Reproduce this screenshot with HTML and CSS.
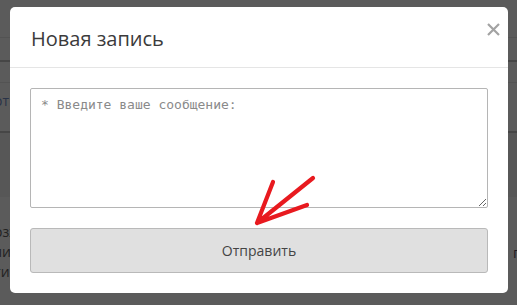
FILE: index.html
```html
<!DOCTYPE html>
<html lang="ru">
<head>
<meta charset="utf-8">
<title>Новая запись</title>
<link rel="stylesheet" href="styles.css">
</head>
<body>
<div class="page">
  <div class="row r1"></div>
  <div class="row r2"></div>
  <div class="row r3"></div>
  <div class="row r4"><span class="bgtext">Вот</span></div>
  <div class="row r5"></div>
  <div class="para">
    <p>Возж</p>
    <p>Вли</p>
    <p>Вти</p>
  </div>
  <div class="rightglyph">г</div>
</div>
<div class="modal">
  <div class="modal-header">
    <h4 class="modal-title">Новая запись</h4>
    <button class="close" type="button" aria-label="Закрыть">
      <svg width="13" height="13" viewBox="0 0 13 13"><path d="M1 1L12 12M12 1L1 12" stroke="#a3a3a3" stroke-width="2.2" fill="none"/></svg>
    </button>
  </div>
  <div class="modal-body">
    <textarea class="message" placeholder="* Введите ваше сообщение:"></textarea>
    <button class="send" type="button">Отправить</button>
  </div>
  <svg class="arrow" width="80" height="70" viewBox="0 0 80 70">
    <path d="M71 8L15 53M31 12L15 53L65 35" stroke="#e81a1f" stroke-width="4.2" stroke-linecap="round" stroke-linejoin="round" fill="none"/>
  </svg>
</div>
</body>
</html>
```
FILE: styles.css
```css
html, body {
  margin: 0;
  padding: 0;
}
body {
  width: 517px;
  height: 305px;
  overflow: hidden;
  background: #5b5b5b;
  font-family: "Open Sans", "Liberation Sans", sans-serif;
}
.page {
  display: flex;
  flex-direction: column;
}
.row {
  border-bottom: 1px solid #4e4e4e;
}
.r1 { height: 37px; border-bottom-color: #535353; }
.r2 { height: 22px; border-bottom-color: #464646; border-bottom-width: 2px; }
.r3 { height: 20px; border-bottom-color: #535353; }
.r4 { height: 48px; border-bottom-color: #464646; border-bottom-width: 2px; position: relative; }
.r5 { height: 64px; background: #575757; border-bottom: none; }
.bgtext {
  position: absolute;
  left: -15px;
  top: 8px;
  font-size: 14px;
  color: #2a3348;
}
.para {
  padding-top: 25px;
}
.para p {
  margin: 0 0 0 -15px;
  font-size: 14px;
  line-height: 20px;
  color: #222;
}
.rightglyph {
  position: absolute;
  left: 513px;
  top: 243px;
  font-size: 14px;
  color: #1e1a22;
}
.modal {
  position: fixed;
  left: 10px;
  top: 7px;
  width: 498px;
  height: 286px;
  background: #fff;
  border-radius: 5px;
  box-sizing: border-box;
  display: flex;
  flex-direction: column;
}
.modal-header {
  height: 60px;
  border-bottom: 1px solid #e5e5e5;
  display: flex;
  align-items: center;
  justify-content: space-between;
  padding: 0 8px 0 21px;
}
.modal-title {
  margin: 0;
  font-weight: 400;
  font-size: 20px;
  color: #3b3b3b;
  padding-top: 2px;
}
.close {
  border: 0;
  background: none;
  padding: 0;
  width: 13px;
  height: 13px;
  align-self: flex-start;
  margin-top: 16px;
  display: flex;
}
.modal-body {
  padding: 20px 20px 0 20px;
  display: flex;
  flex-direction: column;
}
.message {
  box-sizing: border-box;
  width: 458px;
  height: 120px;
  margin: 0;
  border: 1px solid #b5b5b5;
  border-radius: 2px;
  padding: 8px 10px;
  font-family: "DejaVu Sans Mono", monospace;
  font-size: 13px;
  line-height: 16px;
  resize: vertical;
}
.message::placeholder {
  color: #8a8a8a;
}
.send {
  margin-top: 20px;
  box-sizing: border-box;
  width: 458px;
  height: 45px;
  background: #e0e0e0;
  border: 1px solid #b9b9b9;
  border-radius: 3px;
  font-family: "Open Sans", "Liberation Sans", sans-serif;
  font-size: 14px;
  color: #444;
  padding: 0;
}
.arrow {
  position: absolute;
  left: 232px;
  top: 163px;
}
```
